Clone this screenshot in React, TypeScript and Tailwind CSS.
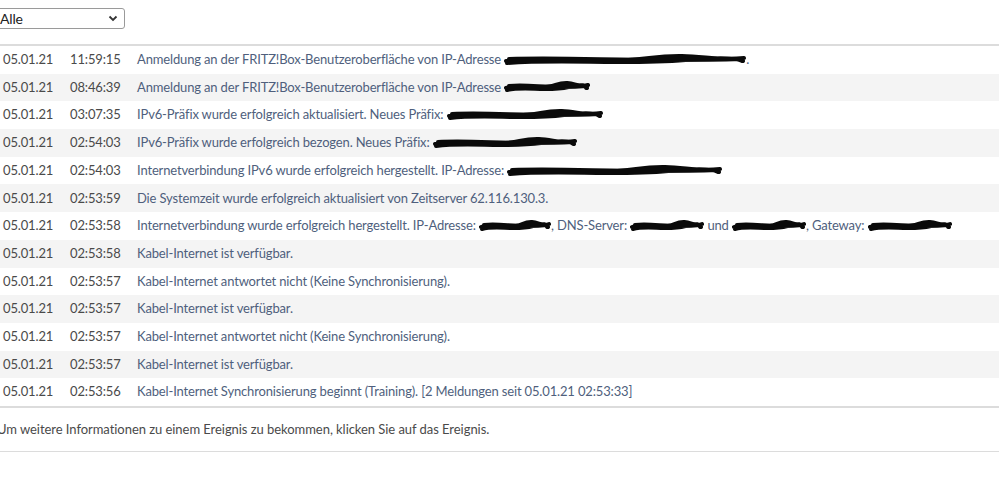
import React from "react";

function Scribble({ w }: { w: number }) {
  const h = 14;
  const d = `M2 8 C ${w * 0.2} 3, ${w * 0.4} 11, ${w * 0.6} 5 S ${w * 0.85} 9, ${w - 2} 5 M3 10 C ${w * 0.25} 6, ${w * 0.5} 12, ${w * 0.75} 7 S ${w - 6} 9, ${w - 3} 8 M5 6 C ${w * 0.3} 4, ${w * 0.55} 9, ${w - 4} 6`;
  return (
    <svg width={w} height={h} viewBox={`0 0 ${w} ${h}`} className="inline-block align-middle -mt-[2px]">
      <path d={d} fill="none" stroke="#0a0a0a" strokeWidth={4} strokeLinecap="round" strokeLinejoin="round" />
    </svg>
  );
}

type Part = string | number;

const rows: { d: string; t: string; m: Part[] }[] = [
  { d: "05.01.21", t: "11:59:15", m: ["Anmeldung an der FRITZ!Box-Benutzeroberfläche von IP-Adresse ", 242, "."] },
  { d: "05.01.21", t: "08:46:39", m: ["Anmeldung an der FRITZ!Box-Benutzeroberfläche von IP-Adresse ", 86] },
  { d: "05.01.21", t: "03:07:35", m: ["IPv6-Präfix wurde erfolgreich aktualisiert. Neues Präfix: ", 156] },
  { d: "05.01.21", t: "02:54:03", m: ["IPv6-Präfix wurde erfolgreich bezogen. Neues Präfix: ", 144] },
  { d: "05.01.21", t: "02:54:03", m: ["Internetverbindung IPv6 wurde erfolgreich hergestellt. IP-Adresse: ", 215] },
  { d: "05.01.21", t: "02:53:59", m: ["Die Systemzeit wurde erfolgreich aktualisiert von Zeitserver 62.116.130.3."] },
  { d: "05.01.21", t: "02:53:58", m: ["Internetverbindung wurde erfolgreich hergestellt. IP-Adresse: ", 72, ", DNS-Server: ", 74, " und ", 74, ", Gateway: ", 84] },
  { d: "05.01.21", t: "02:53:58", m: ["Kabel-Internet ist verfügbar."] },
  { d: "05.01.21", t: "02:53:57", m: ["Kabel-Internet antwortet nicht (Keine Synchronisierung)."] },
  { d: "05.01.21", t: "02:53:57", m: ["Kabel-Internet ist verfügbar."] },
  { d: "05.01.21", t: "02:53:57", m: ["Kabel-Internet antwortet nicht (Keine Synchronisierung)."] },
  { d: "05.01.21", t: "02:53:57", m: ["Kabel-Internet ist verfügbar."] },
  { d: "05.01.21", t: "02:53:56", m: ["Kabel-Internet Synchronisierung beginnt (Training). [2 Meldungen seit 05.01.21 02:53:33]"] },
];

export default function App() {
  return (
    <div className="w-[999px] h-[487px] bg-white overflow-hidden text-[13px] tracking-[-0.15px]" style={{ fontFamily: "Lato, 'Noto Sans', sans-serif" }}>
      <div className="pt-[8px] h-[44px]">
        <div className="-ml-[6px] w-[131px] h-[21px] border border-[#9a9a9a] rounded-[3px] flex items-center justify-between pl-[5px] pr-[6px] text-[14px] text-[#222]">
          <span>Alle</span>
          <svg width="10" height="7" viewBox="0 0 10 7">
            <path d="M1.5 1.5 L5 5 L8.5 1.5" fill="none" stroke="#333" strokeWidth="1.8" />
          </svg>
        </div>
      </div>
      <div className="border-t-2 border-[#dcdcdc] border-b-2">
        {rows.map((r, i) => (
          <div key={i} className={`grid grid-cols-[67px_67px_1fr] h-[27.7px] items-center pl-[3px] whitespace-nowrap ${i % 2 === 1 ? "bg-[#f4f4f4]" : "bg-white"}`}>
            <span className="text-[#4a4a4a]">{r.d}</span>
            <span className="text-[#4a4a4a]">{r.t}</span>
            <span className="text-[#4f5f7d]">
              {r.m.map((p, j) => (typeof p === "number" ? <Scribble key={j} w={p} /> : <span key={j}>{p}</span>))}
            </span>
          </div>
        ))}
      </div>
      <div className="h-[44px] flex items-center -ml-[3px] tracking-[-0.05px] text-[#4a4a4a] border-b border-[#dcdcdc]">
        Um weitere Informationen zu einem Ereignis zu bekommen, klicken Sie auf das Ereignis.
      </div>
    </div>
  );
}
